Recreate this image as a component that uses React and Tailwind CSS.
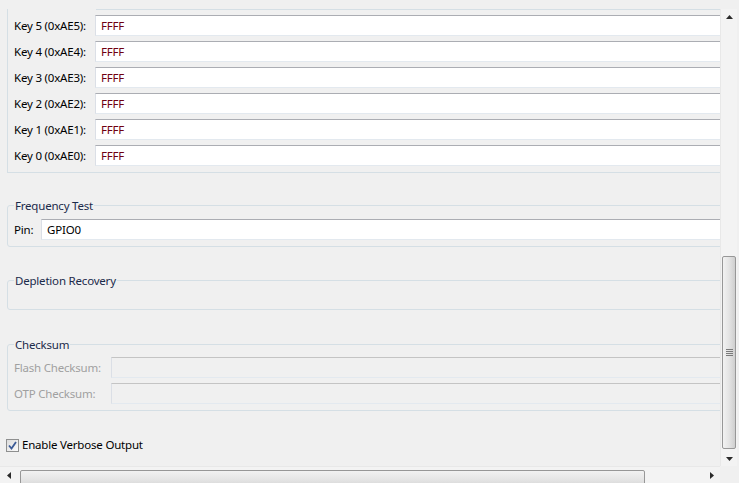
import React from 'react';

const keys = [5, 4, 3, 2, 1, 0];

function TextBox({ value, disabled, red, className = '' }) {
  return (
    <div
      className={`h-[21px] flex items-center pl-[5px] border border-t-[#abadb3] border-x-[#dbdfe6] border-b-[#e3e9ef] ${
        disabled ? 'bg-[#f0f0f0] border-t-[#c4c4c4] border-x-[#d8d8d8] border-b-[#dadada]' : 'bg-white'
      } ${red ? 'text-[#700010]' : 'text-black'} ${className}`}
    >
      {value}
    </div>
  );
}

function Group({ title, children, className = '' }) {
  return (
    <fieldset className={`ml-[7px] w-[760px] border border-[#d5dfe5] rounded-[3px] pl-[6px] pr-0 ${className}`}>
      <legend className="px-[1px] leading-[16px] pt-[1px] text-[#1b2a4a]">{title}</legend>
      {children}
    </fieldset>
  );
}

function Arrow({ dir }) {
  const pts = {
    up: '0,4 7,4 3.5,0',
    down: '0,0 7,0 3.5,4',
    left: '4,0 4,7 0,3.5',
    right: '0,0 0,7 4,3.5',
  }[dir];
  const vertical = dir === 'up' || dir === 'down';
  return (
    <svg width={vertical ? 7 : 4} height={vertical ? 4 : 7} viewBox={vertical ? '0 0 7 4' : '0 0 4 7'}>
      <polygon points={pts} fill="#2a2a2a" />
    </svg>
  );
}

export default function App() {
  return (
    <div
      className="w-[739px] h-[483px] bg-[#f0f0f0] overflow-hidden flex flex-col text-[11.5px] tracking-[-0.2px] text-black"
      style={{ fontFamily: '"Noto Sans", "Open Sans", sans-serif' }}
    >
      <div className="h-[9px] shrink-0" />
      <div className="flex h-[457px] shrink-0">
        {/* content */}
        <div className="w-[720px] h-full overflow-hidden shrink-0">
          {/* Keys group (top is scrolled away) */}
          <div className="ml-[7px] w-[760px] border-l border-b border-[#d5dfe5] pl-[6px] pb-[6px]">
            <div className="h-px ml-[82px] bg-[#d5dfe5]" />
            <div className="flex flex-col gap-[5px] mt-[5px]">
              {keys.map((k) => (
                <div key={k} className="flex items-center">
                  <span className="w-[81px] shrink-0 whitespace-nowrap">{`Key ${k} (0xAE${k}):`}</span>
                  <TextBox value="FFFF" red className="flex-1" />
                </div>
              ))}
            </div>
          </div>

          <Group title="Frequency Test" className="mt-[24px] pb-[6px]">
            <div className="flex items-center mt-[5px]">
              <span className="w-[27px] shrink-0">Pin:</span>
              <TextBox value="GPIO0" className="flex-1" />
            </div>
          </Group>

          <Group title="Depletion Recovery" className="mt-[25px]">
            <div className="h-[20px]" />
          </Group>

          <Group title="Checksum" className="mt-[26px] pb-[6px]">
            <div className="flex flex-col gap-[5px] mt-[4px]">
              <div className="flex items-center">
                <span className="w-[97px] shrink-0 text-[#a0a0a0]">Flash Checksum:</span>
                <TextBox value="" disabled className="flex-1 h-[20px]" />
              </div>
              <div className="flex items-center">
                <span className="w-[97px] shrink-0 text-[#a0a0a0]">OTP Checksum:</span>
                <TextBox value="" disabled className="flex-1 h-[20px]" />
              </div>
            </div>
          </Group>

          <label className="flex items-center mt-[26px] ml-[6px] h-[16px]">
            <span className="w-[13px] h-[13px] border border-[#8e8f8f] bg-gradient-to-br from-[#dcdcdc] to-[#fbfbfb] flex items-center justify-center">
              <svg width="9" height="9" viewBox="0 0 9 9">
                <path d="M1 4.5 L3.5 7.5 L8 1" stroke="#3b5a96" strokeWidth="1.8" fill="none" />
              </svg>
            </span>
            <span className="ml-[3px]">Enable Verbose Output</span>
          </label>
        </div>

        {/* vertical scrollbar */}
        <div className="w-[17px] h-full flex flex-col items-center bg-[#f3f3f3] border-l border-[#e8e8e8] shrink-0">
          <div className="h-[17px] w-full flex items-center justify-center">
            <Arrow dir="up" />
          </div>
          <div className="flex-1 w-full flex flex-col px-[1px]">
            <div className="h-[231px]" />
            <div className="h-[193px] rounded-[2px] border border-[#979797] bg-gradient-to-r from-[#f2f2f2] via-[#e4e4e4] to-[#cfcfcf] flex items-center justify-center">
              <div className="flex flex-col gap-[1px]">
                <div className="w-[7px] h-px bg-[#7a7a7a]" />
                <div className="w-[7px] h-px bg-[#7a7a7a]" />
                <div className="w-[7px] h-px bg-[#7a7a7a]" />
                <div className="w-[7px] h-px bg-[#7a7a7a]" />
              </div>
            </div>
          </div>
          <div className="h-[17px] w-full flex items-center justify-center pt-[3px]">
            <Arrow dir="down" />
          </div>
        </div>
        <div className="w-[2px] shrink-0" />
      </div>

      {/* horizontal scrollbar */}
      <div className="h-[17px] flex shrink-0">
        <div className="w-[720px] flex bg-[#f3f3f3] border-t border-[#e8e8e8]">
          <div className="w-[17px] flex items-center justify-center">
            <Arrow dir="left" />
          </div>
          <div className="flex-1 pt-[3px]">
            <div className="w-[625px] h-[20px] ml-[3px] rounded-[2px] border border-[#979797] bg-gradient-to-b from-[#f2f2f2] via-[#e4e4e4] to-[#cfcfcf]" />
          </div>
          <div className="w-[17px] flex items-center justify-center">
            <Arrow dir="right" />
          </div>
        </div>
      </div>
    </div>
  );
}
